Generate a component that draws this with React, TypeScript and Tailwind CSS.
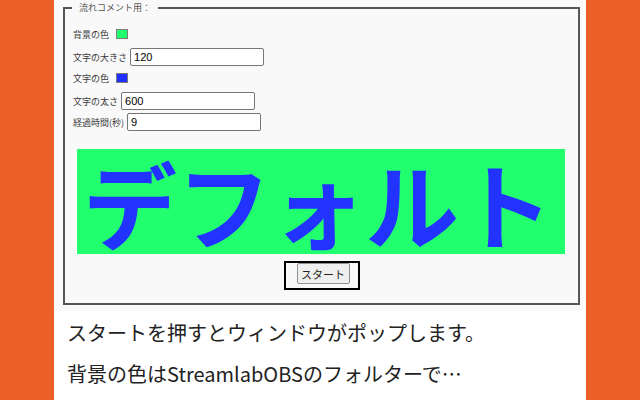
const jp = { fontFamily: '"Noto Sans CJK JP", "Noto Sans", sans-serif' }

function Field({ label, value, w = 'w-[134px]' }: { label: string; value: string; w?: string }) {
  return (
    <div className="flex items-center gap-[3px] h-[18px]">
      <span className="text-[9px] leading-none text-[#3a3a3a]">{label}</span>
      <input
        readOnly
        value={value}
        className={`${w} h-[18px] border border-[#767676] rounded-[2px] bg-white px-[3px] text-[11px] text-black outline-none font-['Liberation_Sans',Arial,sans-serif]`}
      />
    </div>
  )
}

function Swatch({ label, color }: { label: string; color: string }) {
  return (
    <div className="flex items-center h-[14px]">
      <span className="text-[9px] leading-none text-[#3a3a3a]">{label}</span>
      <span className={`ml-[7px] w-[12px] h-[10px] border border-[#7a7a7a] ${color}`} />
    </div>
  )
}

export default function App() {
  return (
    <div className="w-[640px] h-[400px] bg-[#ec5f26] overflow-hidden" style={jp}>
      <div className="mx-auto w-[532px] h-full bg-white">
        {/* settings panel */}
        <div className="w-[529px] h-[311px] bg-[#f9f9f9] pl-[9px] pr-[3px] pt-[1px]">
          <fieldset className="h-[304px] border-2 border-[#555]">
            <legend className="ml-[7px] px-[7px] text-[9px] leading-[14px] text-[#555]">流れコメント用：</legend>

            <div className="pl-[8px] mt-[12px] flex flex-col">
              <Swatch label="背景の色" color="bg-[#22ff6e]" />
              <div className="mt-[7px]">
                <Field label="文字の大きさ" value="120" />
              </div>
              <div className="mt-[5px]">
                <Swatch label="文字の色" color="bg-[#1f2fff]" />
              </div>
              <div className="mt-[7px]">
                <Field label="文字の太さ" value="600" />
              </div>
              <div className="mt-[3px]">
                <Field label="経過時間(秒)" value="9" />
              </div>
            </div>

            {/* preview */}
            <div className="ml-[12px] mt-[18px] w-[488px] h-[105px] bg-[#22ff6e] flex items-center justify-center">
              <span className="text-[94px] font-bold leading-none text-[#2233ff] pr-[6px]">デフォルト</span>
            </div>

            <div className="mt-[7px] mx-auto w-[76px] h-[29px] border-2 border-black">
              <button className="ml-[11px] w-[53px] h-[21px] p-0 flex items-center justify-center bg-[#efefef] border border-[#8f8f8f] rounded-[2px] text-[11px] leading-[14px] text-[#222]">
                スタート
              </button>
            </div>
          </fieldset>
        </div>

        {/* description */}
        <div className="pl-[13px] pt-[6px] text-[20px] text-[#222]">
          <p className="leading-[32px]">スタートを押すとウィンドウがポップします。</p>
          <p className="mt-[9px] leading-[32px]">背景の色はStreamlabOBSのフォルターで…</p>
        </div>
      </div>
    </div>
  )
}
